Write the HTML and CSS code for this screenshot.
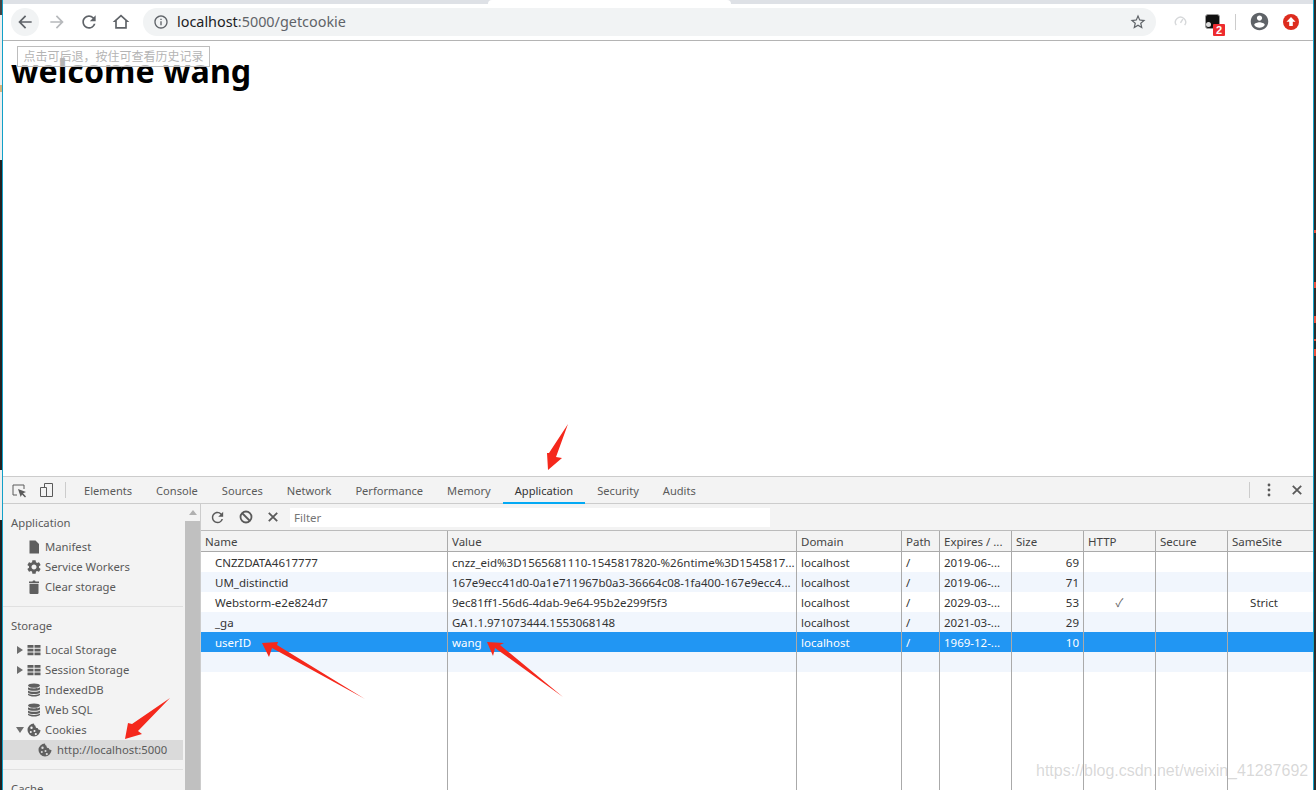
FILE: index.html
```html
<!DOCTYPE html>
<html lang="zh-CN">
<head>
    <meta charset="UTF-8">
    <title>localhost:5000/getcookie</title>
    <link rel="stylesheet" href="styles.css">
</head>
<body>
    <svg class="defs" width="0" height="0">
        <symbol id="i-grid" viewBox="0 0 14 12">
            <path d="M.5 1h6v2.800h-6zM7.500 1h6v2.800h-6zM.5 4.700h6v2.800h-6zM7.500 4.700h6v2.800h-6zM.5 8.400h6v2.800h-6zM7.500 8.400h6v2.800h-6z"/>
        </symbol>
        <symbol id="i-db" viewBox="0 0 14 14">
            <ellipse cx="7" cy="2.600" rx="6" ry="2.200"/>
            <path d="M1 4.200c1 1.600 11 1.600 12 0v2c-1 2-11 2-12 0zM1 7.400c1 1.800 11 1.800 12 0v2c-1 2-11 2-12 0zM1 10.600c1 1.800 11 1.800 12 0v1.200c-1 2.400-11 2.400-12 0z"/>
        </symbol>
        <symbol id="i-cookie" viewBox="0 0 14 14">
            <path fill-rule="evenodd" d="M7 .5a6.500 6.500 0 1 0 6.500 6.500c-1.600.2-2.600-.6-2.800-1.900C9.300 5.200 8.300 4.100 8.500 2.700 7.500 2.500 7 1.600 7 .5zM4.500 3.500a1.200 1.200 0 1 1 0 2.400 1.200 1.200 0 0 1 0-2.400zM3.800 8a1 1 0 1 1 0 2 1 1 0 0 1 0-2zM7.500 7a1 1 0 1 1 0 2 1 1 0 0 1 0-2zM8.800 10a1.100 1.100 0 1 1 0 2.200 1.100 1.100 0 0 1 0-2.200z"/>
        </symbol>
        <symbol id="i-right" viewBox="0 0 6 8"><path d="M0 0l6 4-6 4z"/></symbol>
        <symbol id="i-down" viewBox="0 0 8 6"><path d="M0 0h8L4 6z"/></symbol>
    </svg>

    <div class="screen">
        <div class="edge edge-left"></div>

        <div class="window">
            <div class="tabstrip"><div class="active-tab"></div></div>

            <div class="toolbar">
                <button class="nav-btn back">
                    <svg viewBox="0 0 24 24" width="20" height="20"><path d="M20 11H7.830l5.590-5.590L12 4l-8 8 8 8 1.410-1.410L7.830 13H20v-2z"/></svg>
                </button>
                <button class="nav-btn off">
                    <svg viewBox="0 0 24 24" width="20" height="20"><path d="M12 4l-1.410 1.410L16.170 11H4v2h12.170l-5.580 5.590L12 20l8-8z"/></svg>
                </button>
                <button class="nav-btn">
                    <svg viewBox="0 0 24 24" width="20" height="20"><path d="M17.650 6.350A7.958 7.958 0 0 0 12 4c-4.420 0-7.990 3.580-7.990 8s3.570 8 7.990 8c3.730 0 6.840-2.550 7.730-6h-2.080A5.990 5.990 0 0 1 12 18c-3.310 0-6-2.690-6-6s2.690-6 6-6c1.660 0 3.140.690 4.220 1.780L13 11h7V4l-2.350 2.350z"/></svg>
                </button>
                <button class="nav-btn">
                    <svg viewBox="0 0 24 24" width="20" height="20"><path fill-rule="evenodd" d="M12 3L2 12h3v8h14v-8h3L12 3zm0 2.700l5 4.500V18H7v-7.800l5-4.500z"/></svg>
                </button>

                <div class="omnibox">
                    <svg class="omni-info" viewBox="0 0 24 24" width="16" height="16"><path d="M11 7h2v2h-2zm0 4h2v6h-2zm1-9C6.480 2 2 6.480 2 12s4.480 10 10 10 10-4.480 10-10S17.520 2 12 2zm0 18c-4.410 0-8-3.590-8-8s3.590-8 8-8 8 3.590 8 8-3.590 8-8 8z"/></svg>
                    <span class="url"><span class="url-host">localhost</span>:5000/getcookie</span>
                    <svg class="omni-star" viewBox="0 0 24 24" width="18" height="18"><path d="M22 9.240l-7.190-.620L12 2 9.190 8.630 2 9.240l5.460 4.730L5.820 21 12 17.270 18.180 21l-1.630-7.030L22 9.240zM12 15.400l-3.760 2.270 1-4.280-3.320-2.880 4.380-.380L12 6.100l1.710 4.040 4.380.380-3.320 2.880 1 4.280L12 15.400z"/></svg>
                </div>

                <button class="nav-btn">
                    <svg viewBox="0 0 14 14" width="13" height="13" class="gauge"><path d="M2.500 11a5.500 5.500 0 1 1 9 0" /><path d="M7 8.500l2.500-4" /></svg>
                </button>
                <button class="nav-btn ext">
                    <span class="ext-icon"><span class="ext-dot"></span></span>
                    <span class="ext-badge">2</span>
                </button>
                <span class="toolbar-sep"></span>
                <button class="nav-btn">
                    <svg viewBox="0 0 24 24" width="21" height="21"><path d="M12 2C6.480 2 2 6.480 2 12s4.480 10 10 10 10-4.480 10-10S17.520 2 12 2zm0 3c1.660 0 3 1.340 3 3s-1.340 3-3 3-3-1.340-3-3 1.340-3 3-3zm0 14.200c-2.500 0-4.710-1.280-6-3.220.030-1.990 4-3.080 6-3.080 1.990 0 5.970 1.090 6 3.080-1.290 1.940-3.500 3.220-6 3.220z"/></svg>
                </button>
                <button class="nav-btn">
                    <svg viewBox="0 0 18 18" width="18" height="18"><circle cx="9" cy="9" r="8" fill="#dd2c1e"/><path fill="#fff" d="M9 4l4.500 4.800h-2.700V13H7.200V8.800H4.500z"/></svg>
                </button>
            </div>

            <div class="page">
                <h1>welcome wang</h1>
            </div>

            <div class="devtools">
                <div class="dt-tabs">
                    <span class="dt-icon inspect">
                        <svg viewBox="0 0 16 16" width="16" height="16"><path class="line" d="M6 13H2V3h11v4"/><path d="M7 7l8 3-3 1.300L15 14.500 14 15.500l-3-3L9.700 15z"/></svg>
                    </span>
                    <span class="dt-icon device">
                        <svg viewBox="0 0 16 16" width="16" height="16"><path class="line" d="M5.500 5.500v-4h8v13h-8M1.500 5.500h6v9h-6z"/></svg>
                    </span>
                    <span class="dt-sep"></span>
                    <span class="dt-tab">Elements</span>
                    <span class="dt-tab">Console</span>
                    <span class="dt-tab">Sources</span>
                    <span class="dt-tab">Network</span>
                    <span class="dt-tab">Performance</span>
                    <span class="dt-tab">Memory</span>
                    <span class="dt-tab selected">Application</span>
                    <span class="dt-tab">Security</span>
                    <span class="dt-tab">Audits</span>
                    <span class="dt-tabs-right">
                        <span class="dt-sep"></span>
                        <svg class="dt-more" viewBox="0 0 4 14" width="4" height="14"><circle cx="2" cy="2" r="1.400"/><circle cx="2" cy="7" r="1.400"/><circle cx="2" cy="12" r="1.400"/></svg>
                        <svg class="dt-close" viewBox="0 0 10 10" width="10" height="10"><path d="M.800.800l8.400 8.400M9.200.800L.800 9.200"/></svg>
                    </span>
                </div>

                <div class="dt-body">
                    <div class="sidebar">
                        <div class="side-list">
                            <div class="side-title">Application</div>
                            <div class="side-row">
                                <svg class="ic" viewBox="0 0 14 14"><path d="M2.500.5h6L12 4v9.500H2.500z"/></svg>Manifest
                            </div>
                            <div class="side-row">
                                <svg class="ic" viewBox="2 2 20 20"><path d="M19.140 12.940c.040-.300.060-.610.060-.940 0-.320-.020-.640-.070-.940l2.030-1.580a.490.490 0 0 0 .120-.610l-1.920-3.320a.488.488 0 0 0-.590-.220l-2.390.960c-.500-.380-1.030-.700-1.620-.940l-.360-2.540a.484.484 0 0 0-.480-.410h-3.840c-.240 0-.430.170-.470.410l-.360 2.540c-.590.240-1.130.570-1.620.940l-2.390-.960c-.220-.080-.470 0-.590.220L2.740 8.870c-.120.210-.080.470.120.610l2.030 1.580c-.050.300-.090.630-.090.940s.020.640.070.940l-2.030 1.580a.490.490 0 0 0-.120.610l1.920 3.320c.120.220.370.290.590.220l2.390-.96c.500.380 1.030.700 1.620.940l.360 2.540c.050.240.240.410.480.410h3.840c.240 0 .440-.17.470-.41l.360-2.540c.590-.240 1.130-.56 1.620-.94l2.390.96c.220.080.470 0 .590-.22l1.920-3.320c.120-.220.070-.470-.12-.61l-2.010-1.580zM12 15.600c-1.980 0-3.600-1.620-3.600-3.600s1.620-3.600 3.600-3.600 3.600 1.620 3.600 3.600-1.620 3.600-3.600 3.600z"/></svg>Service Workers
                            </div>
                            <div class="side-row">
                                <svg class="ic" viewBox="0 0 14 14"><path d="M2.500 3.800h9V13a1 1 0 0 1-1 1h-7a1 1 0 0 1-1-1zM2 1.500h3.500l.5-1h2l.5 1H12v1.400H2z"/></svg>Clear storage
                            </div>
                            <div class="side-divider"></div>

                            <div class="side-title">Storage</div>
                            <div class="side-row">
                                <svg class="tree"><use href="#i-right"/></svg>
                                <svg class="ic"><use href="#i-grid"/></svg>Local Storage
                            </div>
                            <div class="side-row">
                                <svg class="tree"><use href="#i-right"/></svg>
                                <svg class="ic"><use href="#i-grid"/></svg>Session Storage
                            </div>
                            <div class="side-row">
                                <svg class="ic"><use href="#i-db"/></svg>IndexedDB
                            </div>
                            <div class="side-row">
                                <svg class="ic"><use href="#i-db"/></svg>Web SQL
                            </div>
                            <div class="side-row">
                                <svg class="tree down"><use href="#i-down"/></svg>
                                <svg class="ic"><use href="#i-cookie"/></svg>Cookies
                            </div>
                            <div class="side-row child active">
                                <svg class="ic"><use href="#i-cookie"/></svg>http://localhost:5000
                            </div>
                            <div class="side-divider"></div>

                            <div class="side-title">Cache</div>
                        </div>
                        <div class="side-scroll">
                            <span class="scroll-up"></span>
                            <span class="scroll-thumb"></span>
                        </div>
                    </div>

                    <div class="cookies">
                        <div class="cookie-tools">
                            <svg class="tool-ic" viewBox="0 0 24 24" width="17" height="17"><path d="M17.650 6.350A7.958 7.958 0 0 0 12 4c-4.420 0-7.990 3.580-7.990 8s3.570 8 7.990 8c3.730 0 6.840-2.550 7.730-6h-2.080A5.990 5.990 0 0 1 12 18c-3.310 0-6-2.690-6-6s2.690-6 6-6c1.660 0 3.140.690 4.220 1.780L13 11h7V4l-2.350 2.350z"/></svg>
                            <svg class="tool-ic stroke block" viewBox="0 0 14 14" width="14" height="14"><circle cx="7" cy="7" r="5.500"/><path d="M3 3l8 8"/></svg>
                            <svg class="tool-ic stroke clear" viewBox="0 0 10 10" width="10" height="10"><path d="M.800.800l8.400 8.400M9.200.800L.800 9.200"/></svg>
                            <div class="filter">Filter</div>
                        </div>

                        <table class="cookie-table">
                            <colgroup>
                                <col class="c-name"><col class="c-value"><col class="c-domain"><col class="c-path">
                                <col class="c-num"><col class="c-num"><col class="c-num"><col class="c-num"><col>
                            </colgroup>
                            <thead>
                                <tr><th>Name</th><th>Value</th><th>Domain</th><th>Path</th><th>Expires / ...</th><th>Size</th><th>HTTP</th><th>Secure</th><th>SameSite</th></tr>
                            </thead>
                            <tbody>
                                <tr><td class="name">CNZZDATA4617777</td><td>cnzz_eid%3D1565681110-1545817820-%26ntime%3D1545817...</td><td>localhost</td><td>/</td><td>2019-06-...</td><td class="size">69</td><td></td><td></td><td></td></tr>
                                <tr class="odd"><td class="name">UM_distinctid</td><td>167e9ecc41d0-0a1e711967b0a3-36664c08-1fa400-167e9ecc4...</td><td>localhost</td><td>/</td><td>2019-06-...</td><td class="size">71</td><td></td><td></td><td></td></tr>
                                <tr><td class="name">Webstorm-e2e824d7</td><td>9ec81ff1-56d6-4dab-9e64-95b2e299f5f3</td><td>localhost</td><td>/</td><td>2029-03-...</td><td class="size">53</td><td class="check">✓</td><td></td><td class="strict">Strict</td></tr>
                                <tr class="odd"><td class="name">_ga</td><td>GA1.1.971073444.1553068148</td><td>localhost</td><td>/</td><td>2021-03-...</td><td class="size">29</td><td></td><td></td><td></td></tr>
                                <tr class="picked"><td class="name">userID</td><td>wang</td><td>localhost</td><td>/</td><td>1969-12-...</td><td class="size">10</td><td></td><td></td><td></td></tr>
                                <tr class="odd"><td></td><td></td><td></td><td></td><td></td><td></td><td></td><td></td><td></td></tr>
                                <tr class="filler"><td></td><td></td><td></td><td></td><td></td><td></td><td></td><td></td><td></td></tr>
                            </tbody>
                        </table>
                    </div>
                </div>
            </div>
        </div>

        <div class="edge edge-right"></div>
    </div>

    <!-- things pasted on top of the screenshot -->
    <div class="back-tip">点击可后退，按住可查看历史记录</div>
    <svg class="marks" viewBox="0 0 1316 790" width="1316" height="790">
        <polygon points="568,424 556,457 562,458 548,470 547,453 549,453"/>
        <polygon points="170,698 138,731 142,734 125,739 128,723 132,724"/>
        <polygon points="365,699 272,648 269,657 262,643 278,642 277,645"/>
        <polygon points="563,697 495,648 493,656 487,642 504,643 500,645"/>
    </svg>
    <div class="watermark">https://blog.csdn.net/weixin_41287692</div>
</body>
</html>
```

FILE: styles.css
```css
* {
    box-sizing: border-box;
}
html, body {
    margin: 0;
    height: 790px;
    overflow: hidden;
    background: #fff;
}
body {
    font-family: 'Noto Sans', 'Noto Sans CJK SC', sans-serif;
    font-size: 11.5px;
    color: #333;
}
.defs {
    position: absolute;
}
.screen {
    display: flex;
    height: 790px;
}

/* bits of the desktop behind the window */
.edge {
    flex: none;
    height: 100%;
}
.edge-left {
    width: 3px;
    border-right: 1px solid #12a0c8;
    background: linear-gradient(#444 0 15px, #eee 15px 85px, #d9b47c 85px 92px, #eee 92px 160px, #222 160px 470px, #eee 470px 520px, #222 520px);
}
.edge-right {
    width: 3px;
    border-left: 1px solid #12a0c8;
    background: linear-gradient(#2b2b2b 0 230px, #e8503c 230px 233px, #2b2b2b 233px 282px, #e8503c 282px 288px, #2b2b2b 288px 316px, #e8503c 316px 323px, #2b2b2b 323px 339px, #e8503c 339px 341px, #2b2b2b 341px 349px, #e8503c 349px 356px, #2b2b2b 356px);
}
.window {
    flex: 1;
    min-width: 0;
    display: flex;
    flex-direction: column;
}

/* browser chrome */
.tabstrip {
    height: 4px;
    background: #dee1e6;
}
.active-tab {
    width: 243px;
    height: 4px;
    margin-left: 485px;
    background: #fff;
    border-radius: 4px 4px 0 0;
}
.toolbar {
    height: 37px;
    display: flex;
    align-items: center;
    padding: 0 6px 1px;
    background: #fff;
    border-bottom: 1px solid #b4b4b4;
}
.nav-btn {
    position: relative;
    flex: none;
    width: 32px;
    height: 28px;
    padding: 0;
    display: flex;
    align-items: center;
    justify-content: center;
    background: none;
    border: none;
}
.nav-btn svg {
    fill: #5f6368;
}
.nav-btn.off svg {
    fill: #b7b9bc;
}
.nav-btn.back::before {
    content: "";
    position: absolute;
    left: 2px;
    top: 0;
    width: 28px;
    height: 28px;
    border-radius: 50%;
    background: #f1f3f4;
}
.nav-btn.back svg {
    position: relative;
}
.nav-btn svg.gauge {
    fill: none;
    stroke: #d6d8da;
    stroke-width: 1.500;
}
.ext-icon {
    position: relative;
    width: 15px;
    height: 15px;
    background: #111;
    border: 1px solid #999;
    border-radius: 3px;
}
.ext-dot {
    position: absolute;
    left: 0;
    bottom: 1px;
    width: 5px;
    height: 5px;
    border-radius: 50%;
    background: #ddd;
}
.ext-badge {
    position: absolute;
    left: 17px;
    top: 16px;
    width: 12px;
    height: 12px;
    background: #ee2b2f;
    border-radius: 1px;
    color: #fff;
    font: bold 11px/12px 'Liberation Sans', sans-serif;
    text-align: center;
}
.toolbar-sep {
    flex: none;
    width: 1px;
    height: 16px;
    margin: 0 7px;
    background: #ccc;
}
.omnibox {
    flex: 1;
    height: 28px;
    margin: 0 8px 0 6px;
    padding: 0 9px 0 10px;
    display: flex;
    align-items: center;
    background: #f1f3f4;
    border-radius: 14px;
}
.omnibox svg {
    flex: none;
    fill: #5f6368;
}
.url {
    flex: 1;
    margin-left: 8px;
    font-size: 14.4px;
    color: #5f6368;
}
.url-host {
    color: #202124;
}
.page {
    flex: 1;
    min-height: 0;
    padding: 9px 8px 0;
    background: #fff;
}
h1 {
    margin: 0;
    font-size: 32.2px;
    line-height: 42px;
    font-weight: 700;
    color: #000;
}

/* devtools */
.devtools {
    flex: none;
    height: 314px;
    display: flex;
    flex-direction: column;
    border-top: 1px solid #ccc;
    overflow: hidden;
}
.dt-tabs {
    flex: none;
    height: 27px;
    display: flex;
    align-items: stretch;
    background: #f3f3f3;
    border-bottom: 1px solid #ccc;
    color: #5a5a5a;
    font-size: 11.1px;
}
.dt-icon {
    width: 27px;
    display: flex;
    align-items: center;
    justify-content: center;
    fill: #5a5a5a;
}
.inspect {
    margin-left: 2px;
}
.device {
    margin-left: 1px;
}
.dt-icon .line {
    fill: none;
    stroke: #5a5a5a;
    stroke-width: 1;
}
.dt-sep {
    width: 1px;
    height: 16px;
    margin: 5px 6px 0 5px;
    background: #ccc;
}
.dt-tab {
    padding: 5px 12px 0;
    line-height: 17px;
    border-bottom: 2px solid transparent;
    margin-bottom: -1px;
}
.dt-tab.selected {
    color: #333;
    border-bottom-color: #03a9f4;
}
.dt-tabs-right {
    margin-left: auto;
    display: flex;
    align-items: center;
    padding-right: 11px;
}
.dt-tabs-right .dt-sep {
    margin: 0 17px 0 0;
}
.dt-more {
    fill: #5a5a5a;
    margin-right: 21px;
}
.dt-close {
    fill: none;
    stroke: #5a5a5a;
    stroke-width: 1.800;
}
.dt-body {
    flex: 1;
    min-height: 0;
    display: flex;
}
.sidebar {
    flex: none;
    width: 198px;
    display: flex;
    background: #f3f3f3;
    border-right: 1px solid #ccc;
    overflow: hidden;
}
.side-list {
    width: 180px;
    flex: none;
    margin-right: 2px;
    padding-top: 9px;
    color: #5a5a5a;
    font-size: 11.3px;
}
.side-title {
    height: 20px;
    margin-bottom: 4px;
    padding-left: 8px;
    line-height: 20px;
}
.side-row {
    position: relative;
    height: 20px;
    padding-left: 42px;
    line-height: 20px;
    white-space: nowrap;
}
.side-row.child {
    padding-left: 54px;
}
.side-row.active {
    background: #dadada;
}
.ic {
    position: absolute;
    left: 24px;
    top: 3px;
    width: 14px;
    height: 14px;
    fill: #5f5f5f;
}
.child .ic {
    left: 35px;
}
.tree {
    position: absolute;
    left: 14px;
    top: 6px;
    width: 6px;
    height: 8px;
    fill: #6e6e6e;
}
.tree.down {
    left: 13px;
    top: 7px;
    width: 8px;
    height: 6px;
}
.side-divider {
    height: 1px;
    margin: 9px 0 9px;
    background: #e0e0e0;
}
.side-scroll {
    flex: none;
    width: 15px;
    display: flex;
    flex-direction: column;
    align-items: stretch;
}
.scroll-up {
    flex: none;
    align-self: center;
    width: 0;
    height: 0;
    margin: 6px 0 6px;
    border: 4px solid transparent;
    border-top: 0;
    border-bottom: 5px solid #b0b0b0;
}
.scroll-thumb {
    flex: 1;
    background: #c0c0c0;
}
.cookies {
    flex: 1;
    min-width: 0;
    display: flex;
    flex-direction: column;
    background: #fff;
}
.cookie-tools {
    flex: none;
    height: 27px;
    display: flex;
    align-items: center;
    padding-left: 8px;
    background: #f3f3f3;
    border-bottom: 1px solid #bbb;
}
.tool-ic {
    fill: #5a5a5a;
    flex: none;
}
.tool-ic.stroke {
    fill: none;
    stroke: #5a5a5a;
    stroke-width: 1.800;
}
.tool-ic.block {
    margin-left: 13px;
}
.tool-ic.clear {
    margin-left: 15px;
}
.filter {
    width: 480px;
    height: 19px;
    margin: 1px 0 0 12px;
    padding-left: 4px;
    background: #fff;
    line-height: 19px;
    color: #757575;
}
.cookie-table {
    width: 100%;
    table-layout: fixed;
    border-collapse: separate;
    border-spacing: 0;
}
.c-name { width: 247px; }
.c-value { width: 349px; }
.c-domain { width: 105px; }
.c-path { width: 38px; }
.c-num { width: 72px; }
.cookie-table th,
.cookie-table td {
    height: 20px;
    padding: 2px 4px 0;
    border-right: 1px solid #aaa;
    font-weight: 400;
    text-align: left;
    line-height: 18px;
    white-space: nowrap;
    overflow: hidden;
}
.cookie-table th:last-child,
.cookie-table td:last-child {
    border-right: none;
}
.cookie-table th {
    height: 21px;
    padding-top: 0;
    line-height: 19px;
    background: #f3f3f3;
    border-bottom: 1px solid #aaa;
    color: #444;
}
.cookie-table .name {
    padding-left: 14px;
}
.cookie-table .size {
    text-align: right;
}
.cookie-table .check {
    text-align: center;
    color: #666;
}
.cookie-table .strict {
    text-align: center;
    padding-right: 17px;
}
.cookie-table .odd td {
    background: #f1f6fd;
}
.cookie-table .picked td {
    background: #2196f3;
    color: #fff;
}
.cookie-table .filler td {
    height: 130px;
}

/* overlays */
.back-tip {
    position: absolute;
    left: 17px;
    top: 46px;
    width: 193px;
    height: 21px;
    border: 1px solid #bdbdbd;
    background: rgba(255, 255, 255, 0.7);
    color: #b4b4b4;
    font-size: 12px;
    line-height: 19px;
    text-align: center;
    white-space: nowrap;
}
.marks {
    position: absolute;
    left: 0;
    top: 0;
    fill: #f5281c;
    pointer-events: none;
}
.watermark {
    position: absolute;
    left: 1036px;
    top: 761px;
    font-family: 'Liberation Sans', sans-serif;
    font-size: 16px;
    line-height: 20px;
    color: rgba(170, 170, 170, 0.45);
    white-space: nowrap;
}
```
